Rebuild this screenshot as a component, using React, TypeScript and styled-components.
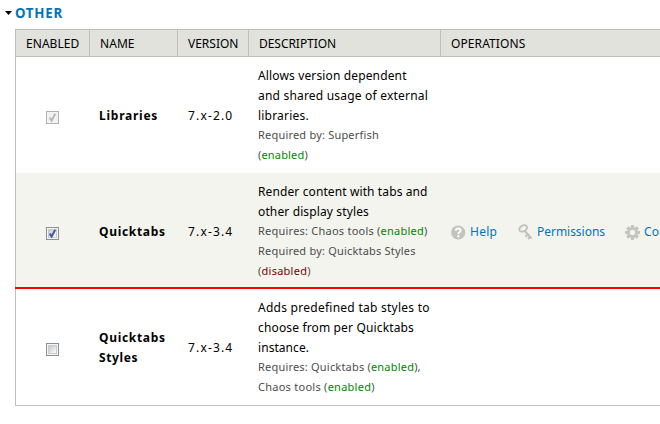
import React from "react";
import styled, { createGlobalStyle, css } from "styled-components";

const GlobalStyle = createGlobalStyle`
  html, body { margin: 0; padding: 0; background: #fff; }
  body { overflow: hidden; font-family: "Noto Sans", "Open Sans", sans-serif; font-size: 12px; color: #000; }
  * { box-sizing: border-box; }
`;

const Page = styled.main`
  width: 660px;
  height: 424px;
  overflow: hidden;
`;

const Legend = styled.div`
  display: flex;
  align-items: center;
  height: 29px;
  padding: 0 0 3px 5px;
  gap: 2px;
`;

const LegendText = styled.h2`
  margin: 0;
  font-size: 13.3px;
  line-height: 20px;
  font-weight: 700;
  letter-spacing: 0.75px;
  color: #0074bd;
`;

const Table = styled.div`
  width: 700px;
  margin-left: 15px;
  border: 1px solid #bebfb9;
`;

const columns = css`
  display: grid;
  grid-template-columns: 73px 88px 71px 192px 1fr;
`;

const HeaderRow = styled.div`
  ${columns}
  height: 27px;
  background: #e1e2dc;
  border-bottom: 1px solid #bebfb9;
`;

const HeaderCell = styled.div<{ $spacing: number }>`
  padding-left: 10px;
  line-height: 27px;
  letter-spacing: ${(p) => p.$spacing}px;
  white-space: nowrap;
  & + & {
    border-left: 1px solid #bebfb9;
  }
`;

const Row = styled.div<{ $shaded?: boolean }>`
  ${columns}
  height: 116px;
  background: ${(p) => (p.$shaded ? "#f3f4ee" : "#fff")};
  ${(p) =>
    p.$shaded &&
    css`
      margin: 0 0 0 -1px;
      padding-left: 1px;
      border-bottom: 2px solid #f00;
      background-clip: padding-box;
      box-shadow: inset 1px 0 #bebfb9;
    `}
`;

const Cell = styled.div<{ $left?: number; $nudge?: number }>`
  display: flex;
  flex-direction: column;
  justify-content: center;
  height: 116px;
  padding: ${(p) => p.$nudge ?? 2}px 0 0 ${(p) => p.$left ?? 10}px;
`;

const Text = styled.div<{ $spacing: number; $kind?: "name" | "small" }>`
  height: 20px;
  line-height: 20px;
  white-space: nowrap;
  letter-spacing: ${(p) => p.$spacing}px;
  ${(p) => p.$kind === "name" && css`font-weight: 700;`}
  ${(p) => p.$kind === "small" && css`font-size: 11px; line-height: 18px; color: #4d4d4d;`}
`;

const State = styled.span<{ $on: boolean }>`
  color: ${(p) => (p.$on ? "#080" : "#800000")};
`;

const Operations = styled.div`
  display: flex;
  align-items: center;
  height: 116px;
  padding: 2px 0 0 11px;
`;

const Operation = styled.a<{ $width: number; $spacing: number }>`
  display: flex;
  flex: none;
  align-items: center;
  gap: 4px;
  width: ${(p) => p.$width}px;
  color: #0074bd;
  line-height: 20px;
  letter-spacing: ${(p) => p.$spacing}px;
  white-space: nowrap;
`;

const Svg = styled.svg`
  display: block;
  flex: none;
`;

type CheckState = "locked" | "checked" | "empty";

function Arrow() {
  return (
    <Svg width="8" height="6" viewBox="0 0 8 6">
      <path d="M0 1h7L3.5 5z" fill="#000" />
    </Svg>
  );
}

function Checkbox({ state }: { state: CheckState }) {
  const locked = state === "locked";
  return (
    <Svg width="13" height="13" viewBox="0 0 13 13" role="checkbox" aria-checked={state !== "empty"}>
      <defs>
        <linearGradient id={`box-${state}`} x1="0" y1="0" x2="1" y2="1">
          <stop offset="0.1" stopColor={locked ? "#f2f2f2" : "#c6cad0"} />
          <stop offset="0.9" stopColor={locked ? "#f2f2f2" : "#f8f8f8"} />
        </linearGradient>
      </defs>
      <rect x="0.5" y="0.5" width="12" height="12" fill="#f5f5f5" stroke={locked ? "#b1b1b1" : "#8e8f8f"} />
      <rect x="2.5" y="2.5" width="8" height="8" fill={`url(#box-${state})`} stroke={locked ? "#efefef" : "#c9cdd2"} />
      {state !== "empty" && (
        <path d="M3.7 6.6l1.9 3L9.2 2.7" fill="none" stroke={locked ? "#b8b8b8" : "#415a9e"} strokeWidth="2" />
      )}
    </Svg>
  );
}

function HelpIcon() {
  return (
    <Svg width="15" height="15" viewBox="0 0 15 15">
      <circle cx="7.2" cy="7.5" r="7.1" fill="#c3c3c0" />
      <path d="M4.8 5.7C4.9 4.1 5.9 3.5 7.2 3.5c1.5 0 2.5.8 2.5 2 0 1.6-2.3 1.6-2.3 3.4" fill="none" stroke="#fff" strokeWidth="1.8" />
      <rect x="6.4" y="10.2" width="2" height="2" fill="#fff" />
    </Svg>
  );
}

function KeyIcon() {
  return (
    <Svg width="15" height="17" viewBox="0 0 15 17">
      <ellipse cx="5.2" cy="4.4" rx="4.1" ry="2.9" transform="rotate(-30 5.2 4.4)" fill="none" stroke="#c1c1be" strokeWidth="1.9" />
      <path d="M6.5 6.8L13.6 14.4M9.6 10.6L7.4 12.7M12 12.7L10 15" fill="none" stroke="#c1c1be" strokeWidth="2.1" />
    </Svg>
  );
}

function GearIcon() {
  return (
    <Svg width="15" height="15" viewBox="-7.5 -7.5 15 15">
      {[0, 45, 90, 135].map((angle) => (
        <rect key={angle} x="-1.6" y="-7.4" width="3.2" height="14.8" transform={`rotate(${angle})`} fill="#c3c3c0" />
      ))}
      <circle r="5.4" fill="#c3c3c0" />
      <circle r="2.7" fill="#f3f4ee" />
    </Svg>
  );
}

const headers: [string, number][] = [
  ["ENABLED", 0.05],
  ["NAME", 0.05],
  ["VERSION", 0],
  ["DESCRIPTION", -0.04],
  ["OPERATIONS", 0.1],
];

export default function App() {
  return (
    <>
      <GlobalStyle />
      <Page>
        <Legend>
          <Arrow />
          <LegendText>OTHER</LegendText>
        </Legend>
        <Table>
          <HeaderRow>
            {headers.map(([label, spacing]) => (
              <HeaderCell key={label} $spacing={spacing}>{label}</HeaderCell>
            ))}
          </HeaderRow>

          <Row>
            <Cell $left={30} $nudge={5}><Checkbox state="locked" /></Cell>
            <Cell><Text $kind="name" $spacing={0.75}>Libraries</Text></Cell>
            <Cell $left={11}><Text $spacing={1.15}>7.x-2.0</Text></Cell>
            <Cell>
              <Text $spacing={0.14}>Allows version dependent</Text>
              <Text $spacing={0.2}>and shared usage of external</Text>
              <Text $spacing={0.2}>libraries.</Text>
              <Text $kind="small" $spacing={0.2}>Required by: Superfish</Text>
              <Text $kind="small" $spacing={0.17}>(<State $on>enabled</State>)</Text>
            </Cell>
            <Operations />
          </Row>

          <Row $shaded>
            <Cell $left={30} $nudge={5}><Checkbox state="checked" /></Cell>
            <Cell><Text $kind="name" $spacing={0.68}>Quicktabs</Text></Cell>
            <Cell $left={11}><Text $spacing={1.15}>7.x-3.4</Text></Cell>
            <Cell>
              <Text $spacing={0.11}>Render content with tabs and</Text>
              <Text $spacing={0.13}>other display styles</Text>
              <Text $kind="small" $spacing={0.23}>Requires: Chaos tools (<State $on>enabled</State>)</Text>
              <Text $kind="small" $spacing={0.2}>Required by: Quicktabs Styles</Text>
              <Text $kind="small" $spacing={0.25}>(<State $on={false}>disabled</State>)</Text>
            </Cell>
            <Operations>
              <Operation $width={67} $spacing={0.25}><HelpIcon />Help</Operation>
              <Operation $width={107} $spacing={-0.03}><KeyIcon />Permissions</Operation>
              <Operation $width={90} $spacing={0.1}><GearIcon />Configure</Operation>
            </Operations>
          </Row>

          <Row>
            <Cell $left={30} $nudge={5}><Checkbox state="empty" /></Cell>
            <Cell>
              <Text $kind="name" $spacing={0.68}>Quicktabs</Text>
              <Text $kind="name" $spacing={0.6}>Styles</Text>
            </Cell>
            <Cell $left={11}><Text $spacing={1.15}>7.x-3.4</Text></Cell>
            <Cell>
              <Text $spacing={0.26}>Adds predefined tab styles to</Text>
              <Text $spacing={0.15}>choose from per Quicktabs</Text>
              <Text $spacing={0.06}>instance.</Text>
              <Text $kind="small" $spacing={0.2}>Requires: Quicktabs (<State $on>enabled</State>),</Text>
              <Text $kind="small" $spacing={0.26}>Chaos tools (<State $on>enabled</State>)</Text>
            </Cell>
            <Operations />
          </Row>
        </Table>
      </Page>
    </>
  );
}
